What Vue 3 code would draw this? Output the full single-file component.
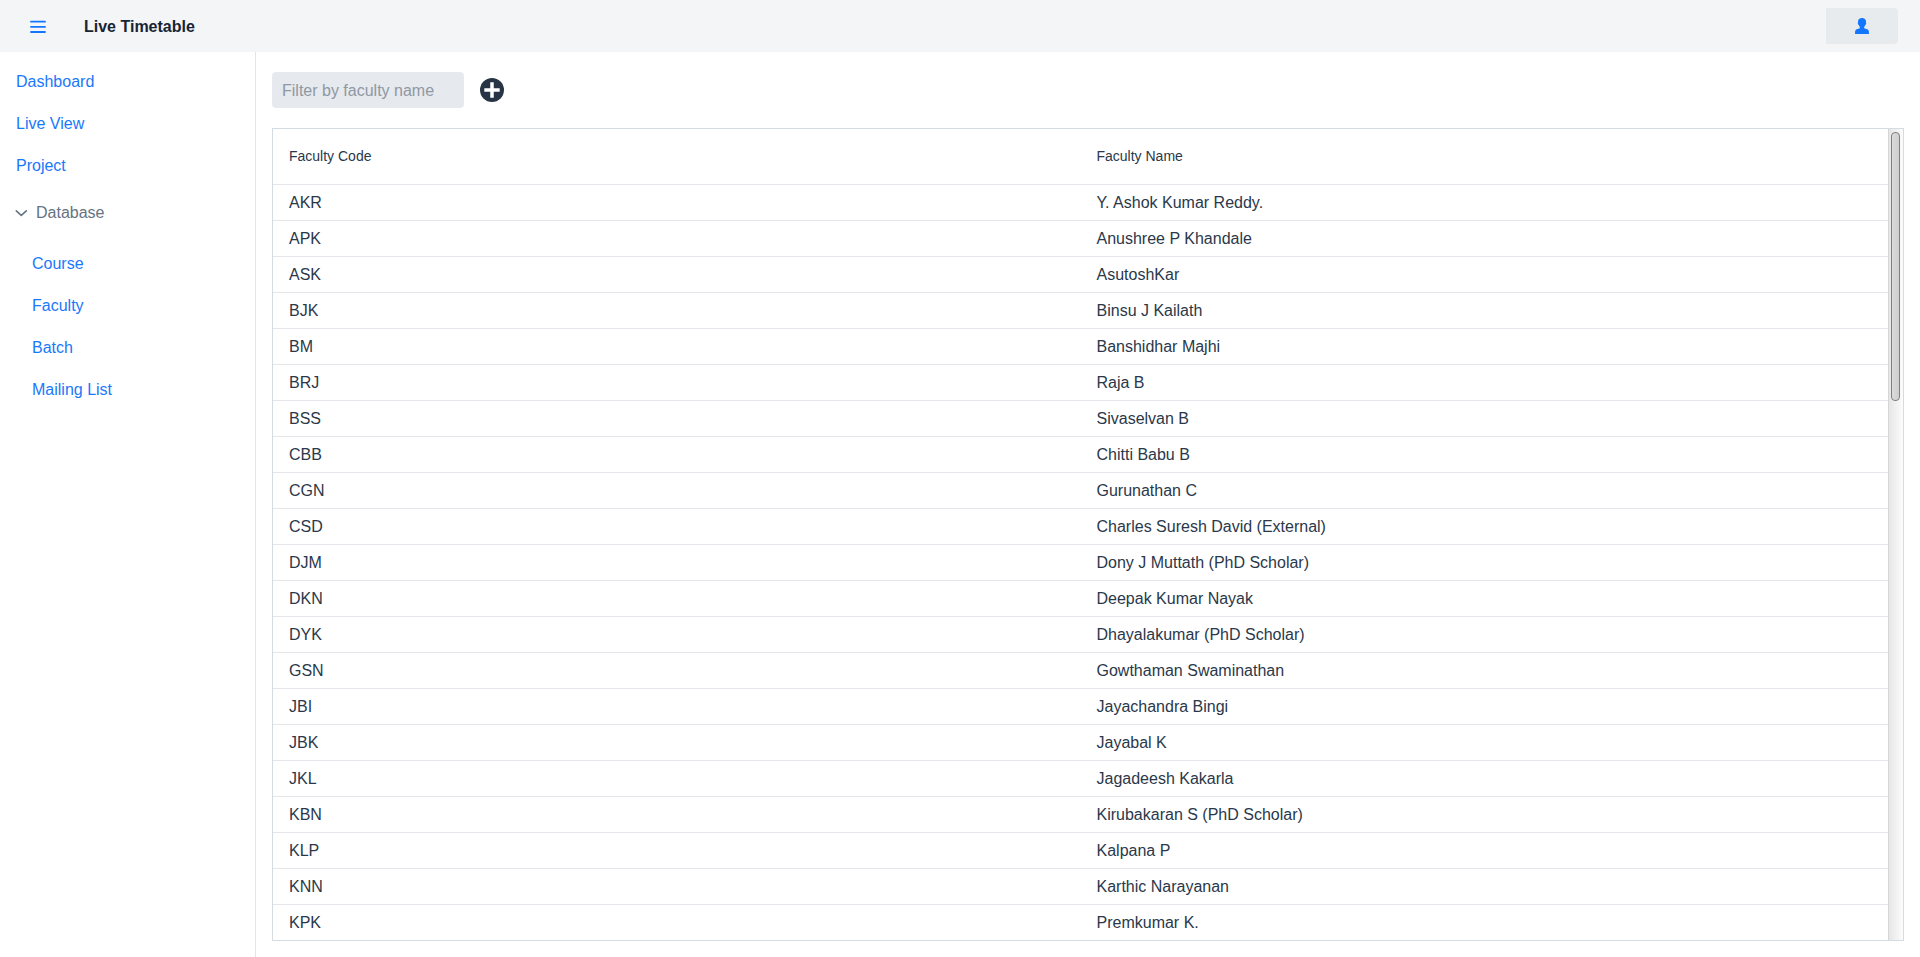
<script setup>
import { ref, computed } from 'vue'

const filter = ref('')
const databaseOpen = ref(true)

const mainLinks = ['Dashboard', 'Live View', 'Project']
const databaseLinks = ['Course', 'Faculty', 'Batch', 'Mailing List']

const faculty = [
  { code: 'AKR', name: 'Y. Ashok Kumar Reddy.' },
  { code: 'APK', name: 'Anushree P Khandale' },
  { code: 'ASK', name: 'AsutoshKar' },
  { code: 'BJK', name: 'Binsu J Kailath' },
  { code: 'BM', name: 'Banshidhar Majhi' },
  { code: 'BRJ', name: 'Raja B' },
  { code: 'BSS', name: 'Sivaselvan B' },
  { code: 'CBB', name: 'Chitti Babu B' },
  { code: 'CGN', name: 'Gurunathan C' },
  { code: 'CSD', name: 'Charles Suresh David (External)' },
  { code: 'DJM', name: 'Dony J Muttath (PhD Scholar)' },
  { code: 'DKN', name: 'Deepak Kumar Nayak' },
  { code: 'DYK', name: 'Dhayalakumar (PhD Scholar)' },
  { code: 'GSN', name: 'Gowthaman Swaminathan' },
  { code: 'JBI', name: 'Jayachandra Bingi' },
  { code: 'JBK', name: 'Jayabal K' },
  { code: 'JKL', name: 'Jagadeesh Kakarla' },
  { code: 'KBN', name: 'Kirubakaran S (PhD Scholar)' },
  { code: 'KLP', name: 'Kalpana P' },
  { code: 'KNN', name: 'Karthic Narayanan' },
  { code: 'KPK', name: 'Premkumar K.' }
]

const visibleFaculty = computed(() => {
  const term = filter.value.toLowerCase()
  return faculty.filter((f) => f.name.toLowerCase().includes(term))
})
</script>

<template>
  <div class="app">
    <header class="topbar">
      <button class="icon-button menu" type="button" aria-label="Toggle menu">
        <svg width="16" height="16" viewBox="0 0 16 16" fill="none" stroke="currentColor" stroke-width="1.800" stroke-linecap="round">
          <path d="M1 3.700h14M1 8.900h14M1 14h14" />
        </svg>
      </button>
      <h1 class="title">Live Timetable</h1>
      <button class="user" type="button" aria-label="Account">
        <svg width="16" height="16" viewBox="0 0 16 16" fill="currentColor">
          <path d="M8 0C5.600 0 4 1.400 4 3.500c0 .5.100.8.200 1.100-.5.100-.5.600-.3 1.200.2.700.4 1 .8 1.100.2.800.6 1.400 1.100 1.900v1.400c-.6.500-2.700.7-3.700 1.300C1.200 12.200 1 13.600 1 16h14c0-2.400-.2-3.800-1.100-4.500-1-.6-3.100-.8-3.700-1.300V8.800c.5-.5.900-1.100 1.100-1.900.4-.1.600-.4.800-1.100.2-.6.200-1.100-.3-1.200.1-.3.200-.6.200-1.100C12 1.400 10.400 0 8 0z" />
        </svg>
      </button>
    </header>

    <div class="body">
      <nav class="sidebar">
        <a v-for="link in mainLinks" :key="link" class="link" href="#">{{ link }}</a>
        <button class="group" type="button" :aria-expanded="databaseOpen" @click="databaseOpen = !databaseOpen">
          <svg width="12" height="12" viewBox="0 0 12 12" fill="none" stroke="currentColor" stroke-width="1.600" stroke-linecap="round" stroke-linejoin="round">
            <path d="M1.300 3.800l5 4.500 5-4.500" />
          </svg>
          <span>Database</span>
        </button>
        <div v-if="databaseOpen" class="sub">
          <a v-for="link in databaseLinks" :key="link" class="link" href="#">{{ link }}</a>
        </div>
      </nav>

      <main class="content">
        <div class="toolbar">
          <input v-model="filter" class="filter" type="text" placeholder="Filter by faculty name" aria-label="Filter by faculty name" />
          <button class="icon-button add" type="button" aria-label="Add faculty">
            <svg width="24" height="24" viewBox="0 0 24 24">
              <circle cx="12" cy="12" r="12" fill="#263445" />
              <path d="M12 4.300v15.400M4.300 12h15.400" stroke="#fff" stroke-width="3.500" />
            </svg>
          </button>
        </div>

        <div class="panel">
          <div class="table-area">
            <table class="table">
              <thead>
                <tr>
                  <th scope="col">Faculty Code</th>
                  <th scope="col">Faculty Name</th>
                </tr>
              </thead>
              <tbody>
                <tr v-for="f in visibleFaculty" :key="f.code">
                  <td>{{ f.code }}</td>
                  <td>{{ f.name }}</td>
                </tr>
              </tbody>
            </table>
          </div>
          <div class="scroll-track" aria-hidden="true">
            <div class="scroll-thumb"></div>
          </div>
        </div>
      </main>
    </div>
  </div>
</template>

<style>
body {
  margin: 0;
  background: #fff;
}
</style>

<style scoped>
.app {
  display: flex;
  flex-direction: column;
  height: 100vh;
  font-family: "Liberation Sans", Arial, sans-serif;
  font-size: 16px;
  line-height: 24px;
  color: #2a384a;
}

button {
  font: inherit;
  border: 0;
  padding: 0;
  cursor: pointer;
}

svg {
  display: block;
}

.topbar {
  display: flex;
  align-items: center;
  flex: none;
  height: 52px;
  padding: 0 22px 0 30px;
  box-sizing: border-box;
  background: #f3f5f7;
}

.icon-button {
  background: none;
}

.menu {
  color: #1476ff;
}

.title {
  margin: 0 auto 0 38px;
  padding-top: 2px;
  font-size: 16px;
  font-weight: 700;
  color: #182433;
}

.user {
  display: flex;
  align-items: center;
  justify-content: center;
  width: 72px;
  height: 36px;
  border-radius: 0 4px 4px 0;
  background: #e7ebee;
  color: #1476ff;
}

.body {
  display: flex;
  flex: 1;
  min-height: 0;
}

.sidebar {
  display: flex;
  flex-direction: column;
  flex: none;
  width: 256px;
  padding-top: 9px;
  box-sizing: border-box;
  border-right: 1px solid #e1e4e8;
}

.link {
  display: block;
  padding: 9px 16px;
  color: #1a78fa;
  text-decoration: none;
}

.group {
  display: flex;
  align-items: center;
  gap: 9px;
  height: 52px;
  padding: 0 15px;
  background: none;
  color: #667382;
}

.sub {
  padding: 4px 0 0 16px;
}

.content {
  display: flex;
  flex-direction: column;
  flex: 1;
  min-width: 0;
  gap: 20px;
  padding: 20px 16px 16px;
}

.toolbar {
  display: flex;
  align-items: center;
  gap: 16px;
}

.filter {
  width: 192px;
  height: 36px;
  padding: 2px 10px 0;
  box-sizing: border-box;
  border: 0;
  border-radius: 4px;
  background: #e6e9ee;
  color: #2a384a;
  font: inherit;
}

.filter::placeholder {
  color: #8f98a3;
  opacity: 1;
}

.panel {
  display: flex;
  flex: 1;
  min-height: 0;
  border: 1px solid #d5dce1;
}

.table-area {
  flex: 1;
  min-width: 0;
  overflow: hidden;
}

.table {
  width: 100%;
  table-layout: fixed;
  border-collapse: separate;
  border-spacing: 0;
}

th,
td {
  box-sizing: border-box;
  padding: 0 16px;
  border-bottom: 1px solid #e3e6eb;
  text-align: left;
}

th {
  height: 56px;
  padding-bottom: 2px;
  font-size: 14px;
  font-weight: 400;
}

td {
  height: 36px;
}

.scroll-track {
  flex: none;
  width: 15px;
  padding: 3px 3px 3px 2px;
  box-sizing: border-box;
  border-left: 1px solid #d6d6d6;
  background: linear-gradient(to right, #e6e6e6, #fcfcfc);
}

.scroll-thumb {
  width: 9px;
  height: 33.4%;
  box-sizing: border-box;
  border: 1px solid #808080;
  border-radius: 4px;
  background: linear-gradient(to right, #dcdcdc, #cecece);
}
</style>
